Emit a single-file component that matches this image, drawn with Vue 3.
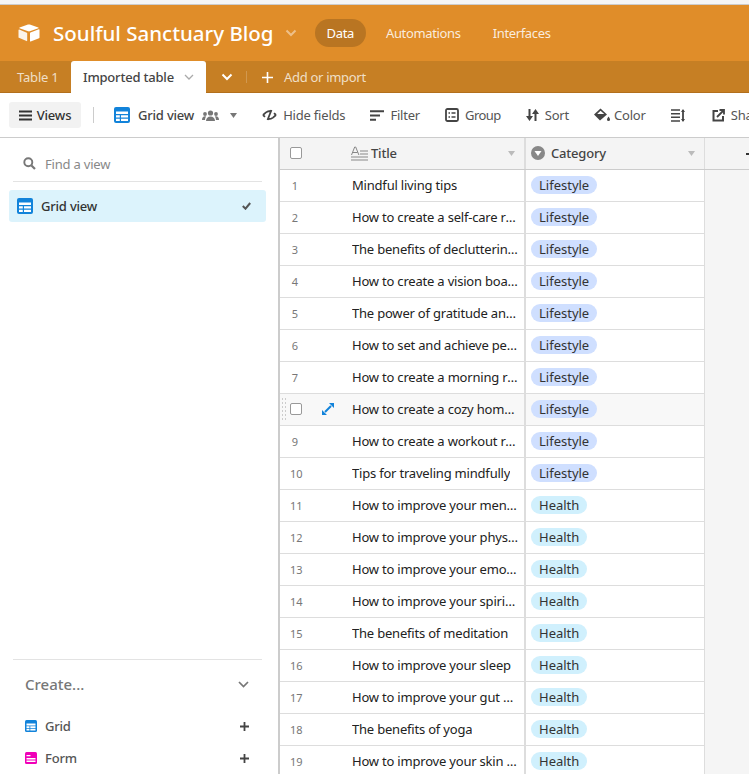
<script setup>
import { ref } from 'vue'

const titles = [
  'Mindful living tips',
  'How to create a self-care routine',
  'The benefits of decluttering your home',
  'How to create a vision board',
  'The power of gratitude and journaling',
  'How to set and achieve personal goals',
  'How to create a morning routine',
  'How to create a cozy home office',
  'How to create a workout routine',
  'Tips for traveling mindfully',
  'How to improve your mental health',
  'How to improve your physical health',
  'How to improve your emotional health',
  'How to improve your spiritual health',
  'The benefits of meditation',
  'How to improve your sleep',
  'How to improve your gut health',
  'The benefits of yoga',
  'How to improve your skin health',
]

const rows = ref(titles.map((title, i) => ({
  num: i + 1,
  title,
  category: i < 10 ? 'Lifestyle' : 'Health',
  hovered: i === 7,
})))
</script>

<template>
  <div class="page">
    <div class="strip"></div>

    <header class="topbar">
      <svg class="logo" width="22" height="18" viewBox="0 0 22 18">
        <path d="M10 .6 1.600 3.400c-.4.2-.4.7 0 .8l8.500 3.100c.5.2 1.200.2 1.700 0l8.500-3.100c.4-.1.4-.6 0-.8L11.800.6c-.6-.2-1.200-.2-1.800 0z" fill="#fff" />
        <path d="M12 9.200v7.800c0 .4.400.600.700.500l8.300-3.200c.3-.1.500-.4.500-.7V5.800c0-.4-.4-.6-.7-.5L12.500 8.500c-.3.100-.5.400-.5.700z" fill="#fff" />
        <path d="M.5 6v7.200c0 .3.200.5.400.6l7.600 3.300c.4.100.7-.1.700-.5V9.400c0-.3-.2-.5-.4-.6L1.200 5.500C.9 5.400.5 5.600.5 6z" fill="#fff" opacity=".9" />
      </svg>
      <h1 class="base-name">Soulful Sanctuary Blog</h1>
      <svg class="base-caret" width="12" height="8" viewBox="0 0 12 8"><path d="M1.500 1.500 6 6l4.500-4.500" fill="none" stroke="#fff" stroke-opacity=".45" stroke-width="2" /></svg>
      <nav class="top-nav">
        <span class="top-link active">Data</span>
        <span class="top-link">Automations</span>
        <span class="top-link">Interfaces</span>
      </nav>
    </header>

    <div class="tabbar">
      <span class="tab">Table 1</span>
      <span class="tab current">
        Imported table
        <svg width="10" height="6" viewBox="0 0 10 6"><path d="M1 1l4 4 4-4" fill="none" stroke="#aaa" stroke-width="1.300" /></svg>
      </span>
      <svg class="tab-more" width="12" height="8" viewBox="0 0 12 8"><path d="M1.500 1.500 6 6l4.500-4.500" fill="none" stroke="#fff" stroke-width="2" /></svg>
      <span class="tab-sep"></span>
      <span class="add-import">
        <svg width="11" height="11" viewBox="0 0 11 11"><path d="M5.500 0v11M0 5.500h11" stroke="#fff" stroke-width="1.600" /></svg>
        Add or import
      </span>
    </div>

    <div class="toolbar">
      <button class="views-btn">
        <svg width="13" height="11" viewBox="0 0 13 11"><path d="M0 1.500h13M0 5.500h13M0 9.500h13" stroke="#333" stroke-width="2" /></svg>
        Views
      </button>
      <span class="tool-sep"></span>
      <span class="view-name">
        <svg class="grid-icon" width="16" height="16" viewBox="0 0 16 16">
          <rect width="16" height="16" rx="2" fill="#1283da" />
          <path d="M2 4.500h12v2.500H2zM2 8.200h3.800v2.400H2zM7 8.200h7v2.400H7zM2 11.800h3.800V14H2zM7 11.800h7V14H7z" fill="#fff" />
        </svg>
        Grid view
        <svg width="17" height="11" viewBox="0 0 17 11" fill="#777">
          <circle cx="8.500" cy="3" r="2.600" /><path d="M4 11c0-3 2-4.500 4.500-4.500S13 8 13 11z" />
          <circle cx="3" cy="4" r="1.900" /><path d="M0 10c0-2.500 1.200-3.700 3-3.700.4 0 .7 0 1 .2C3.300 7.500 3 8.700 3 10z" />
          <circle cx="14" cy="4" r="1.900" /><path d="M17 10c0-2.500-1.200-3.700-3-3.700-.4 0-.7 0-1 .2.700 1 1 2.200 1 3.500z" />
        </svg>
        <svg class="mini-caret" width="7" height="5" viewBox="0 0 7 5"><path d="M0 0h7L3.500 5z" fill="#777" /></svg>
      </span>
      <span class="tool">
        <svg width="15" height="12" viewBox="0 0 15 12"><path d="M1 6l3-2.600C5.400 2.300 6.800 2 8.500 2M14 6l-3 2.600C9.600 9.700 8.200 10 6.500 10M9.500 1 5.500 11M1 6l2 1.800M14 6l-2-1.800" fill="none" stroke="#444" stroke-width="1.800" /></svg>
        Hide fields
      </span>
      <span class="tool">
        <svg width="14" height="11" viewBox="0 0 14 11"><path d="M0 1.200h14M0 5.500h10M0 9.800h6" stroke="#444" stroke-width="2" /></svg>
        Filter
      </span>
      <span class="tool group-tool">
        <svg width="14" height="14" viewBox="0 0 14 14"><rect x="1" y="1" width="12" height="12" rx="1.500" fill="none" stroke="#444" stroke-width="1.800" /><path d="M3.500 5h1.500M6.500 5h4M3.500 9h1.500M6.500 9h4" stroke="#444" stroke-width="1.600" /></svg>
        Group
      </span>
      <span class="tool">
        <svg width="13" height="12" viewBox="0 0 13 12"><path d="M3.500 0v8M9.500 4v8" stroke="#444" stroke-width="2" /><path d="M0 7l3.500 5L7 7zM6 5l3.500-5L13 5z" fill="#444" /></svg>
        Sort
      </span>
      <span class="tool color-tool">
        <svg width="17" height="14" viewBox="0 0 17 14"><path d="M6.500.5 0 6.500 6 12.500l7-6z" fill="#444" /><path d="M6.500 2.800 3.200 6h7z" fill="#fff" /><path d="M14.500 8.500c1 1.400 1.500 2.300 1.500 3a1.500 1.500 0 0 1-3 0c0-.7.500-1.600 1.500-3z" fill="#444" /></svg>
        Color
      </span>
      <span class="tool density-tool">
        <svg width="14" height="13" viewBox="0 0 14 13"><path d="M0 1h9M0 4.700h9M0 8.300h9M0 12h9" stroke="#444" stroke-width="1.500" /><path d="M12 1v11" stroke="#444" stroke-width="1.800" /><path d="M10 3l2-3 2 3zM10 10l2 3 2-3z" fill="#444" /></svg>
      </span>
      <span class="tool">
        <svg width="13" height="13" viewBox="0 0 13 13"><path d="M6 2H1.500v9.500H11V7" fill="none" stroke="#444" stroke-width="2" /><path d="M5 8l6-6M7.500 1H12v4.500" fill="none" stroke="#444" stroke-width="1.800" /></svg>
        Share view
      </span>
    </div>

    <div class="workspace">
      <aside class="sidebar">
        <div class="find">
          <svg width="13" height="13" viewBox="0 0 13 13"><circle cx="5.300" cy="5.300" r="4" fill="none" stroke="#777" stroke-width="1.900" /><path d="M8.500 8.500 12 12" stroke="#777" stroke-width="2.200" /></svg>
          <span>Find a view</span>
        </div>
        <div class="view-item">
          <svg class="grid-icon" width="16" height="16" viewBox="0 0 16 16">
            <rect width="16" height="16" rx="2" fill="#1283da" />
            <path d="M2 4.500h12v2.500H2zM2 8.200h3.800v2.400H2zM7 8.200h7v2.400H7zM2 11.800h3.800V14H2zM7 11.800h7V14H7z" fill="#fff" />
          </svg>
          <span class="view-label">Grid view</span>
          <svg width="9" height="8" viewBox="0 0 9 8"><path d="M.8 4l2.700 2.700L8.200 1" fill="none" stroke="#555" stroke-width="2" /></svg>
        </div>
        <div class="create">
          <div class="create-head">
            <span>Create...</span>
            <svg width="11" height="7" viewBox="0 0 11 7"><path d="M1 1l4.500 4.500L10 1" fill="none" stroke="#777" stroke-width="1.700" /></svg>
          </div>
          <div class="create-item">
            <svg width="12" height="12" viewBox="0 0 12 12"><rect width="12" height="12" rx="1.500" fill="#1283da" /><path d="M1.500 3.500h9v2h-9zM1.500 6.300h3v2h-3zM5.300 6.300h5.200v2H5.300zM1.500 9h3v1.500h-3zM5.300 9h5.200v1.500H5.300z" fill="#fff" /></svg>
            <span class="create-label">Grid</span>
            <svg width="9" height="9" viewBox="0 0 9 9"><path d="M4.500 0v9M0 4.500h9" stroke="#444" stroke-width="1.800" /></svg>
          </div>
          <div class="create-item">
            <svg width="12" height="12" viewBox="0 0 12 12"><rect width="12" height="12" rx="1.500" fill="#f000b8" /><path d="M1.500 3h4v1.300h-4zM1.500 6h9v1.500h-9zM1.500 8.500h9V10h-9z" fill="#fff" /></svg>
            <span class="create-label">Form</span>
            <svg width="9" height="9" viewBox="0 0 9 9"><path d="M4.500 0v9M0 4.500h9" stroke="#444" stroke-width="1.800" /></svg>
          </div>
        </div>
      </aside>

      <section class="grid">
        <div class="head-row">
          <div class="num-cell head-num"><span class="check"></span></div>
          <div class="title-cell head-cell">
            <svg class="type-icon" width="17" height="15" viewBox="0 0 17 15"><path d="M.5 9 3.700 1h1l3.200 8M1.800 6.500h4.800" fill="none" stroke="#888" stroke-width="1" /><path d="M9 5h8M9 8h8M0 11h17M0 14h17" stroke="#888" stroke-width="1" /></svg>
            <span class="head-label">Title</span>
            <svg class="mini-caret" width="7" height="5" viewBox="0 0 7 5"><path d="M0 0h7L3.500 5z" fill="#bbb" /></svg>
          </div>
          <div class="cat-cell head-cell">
            <svg width="14" height="14" viewBox="0 0 14 14"><circle cx="7" cy="7" r="7" fill="#888" /><path d="M3.500 5h7L7 10z" fill="#fff" /></svg>
            <span class="head-label">Category</span>
            <svg class="mini-caret" width="7" height="5" viewBox="0 0 7 5"><path d="M0 0h7L3.500 5z" fill="#bbb" /></svg>
          </div>
          <div class="add-col">
            <svg width="12" height="12" viewBox="0 0 12 12"><path d="M6 0v12M0 6h12" stroke="#333" stroke-width="2" /></svg>
          </div>
        </div>
        <div v-for="row in rows" :key="row.num" class="row" :class="{ hovered: row.hovered }">
          <div class="num-cell">
            <template v-if="row.hovered">
              <span class="drag"></span>
              <span class="check"></span>
              <svg class="expand" width="12" height="12" viewBox="0 0 12 12"><path d="M7 0h5v5zM0 7v5h5z" fill="#1283da" /><path d="M9 3 3 9" stroke="#1283da" stroke-width="2" /></svg>
            </template>
            <span v-else class="num">{{ row.num }}</span>
          </div>
          <div class="title-cell"><span class="title-text">{{ row.title }}</span></div>
          <div class="cat-cell">
            <span class="pill" :class="row.category.toLowerCase()">{{ row.category }}</span>
          </div>
          <div class="empty"></div>
        </div>
      </section>
    </div>
  </div>
</template>

<style>
html, body { margin: 0; height: 100%; overflow: hidden; background: #fff; }
</style>

<style scoped>
.page {
  width: 749px;
  height: 774px;
  overflow: hidden;
  display: flex;
  flex-direction: column;
  font-family: "Noto Sans", sans-serif;
  font-size: 13px;
  letter-spacing: -0.2px;
  color: #333;
}

.strip {
  height: 4px;
  flex: none;
  background: #f5f5f5;
  border-bottom: 1px solid #ccc;
}

.topbar {
  height: 56px;
  flex: none;
  background: #e08d29;
  display: flex;
  align-items: center;
  padding-left: 18px;
  color: #fff;
  box-sizing: border-box;
}

.logo { margin-right: 13px; flex: none; }

.base-name {
  margin: 0;
  font-size: 20.5px;
  font-weight: 500;
  letter-spacing: 0;
  white-space: nowrap;
}

.base-caret { margin-left: 11px; flex: none; }

.top-nav {
  display: flex;
  align-items: center;
  margin-left: 18px;
  gap: 8px;
  letter-spacing: -0.35px;
}

.top-link {
  padding: 0 12px;
  line-height: 28px;
  border-radius: 14px;
  color: rgba(255, 255, 255, .85);
}

.top-link.active {
  background: #b97522;
  color: #fff;
}

.tabbar {
  height: 32px;
  flex: none;
  background: #c67f24;
  box-shadow: inset 0 -1px #b26f1c;
  display: flex;
  align-items: center;
  color: rgba(255, 255, 255, .75);
}

.tab {
  width: 71px;
  flex: none;
  box-sizing: border-box;
  padding-left: 17px;
  white-space: nowrap;
}

.tab.current {
  align-self: stretch;
  display: flex;
  align-items: center;
  gap: 10px;
  background: #fff;
  color: #444;
  font-weight: 500;
  border-radius: 3px 3px 0 0;
  width: 135px;
  padding: 0 12px;
}

.tab-more { margin-left: 15px; flex: none; }

.tab-sep {
  width: 1px;
  height: 12px;
  margin-left: 13px;
  background: rgba(255, 255, 255, .2);
}

.add-import {
  display: flex;
  align-items: center;
  gap: 11px;
  margin-left: 15px;
  letter-spacing: -0.3px;
  white-space: nowrap;
}

.toolbar {
  height: 45px;
  flex: none;
  display: flex;
  align-items: center;
  padding-left: 9px;
  border-bottom: 1px solid #ccc;
  box-sizing: border-box;
  white-space: nowrap;
  color: #555;
}

.views-btn {
  height: 26px;
  width: 72px;
  flex: none;
  border: 0;
  border-radius: 3px;
  background: #f2f2f2;
  display: flex;
  align-items: center;
  justify-content: center;
  gap: 5px;
  font: inherit;
  letter-spacing: inherit;
  font-weight: 500;
  color: #333;
  padding: 0;
}

.tool-sep {
  width: 1px;
  height: 16px;
  flex: none;
  background: #ccc;
  margin: 0 20px 0 12px;
}

.view-name {
  display: flex;
  align-items: center;
  gap: 8px;
  flex: none;
  font-weight: 500;
  color: #444;
  margin-right: 25px;
}

.mini-caret { flex: none; }

.view-name .mini-caret { margin-left: 3px; }

.tool {
  display: flex;
  align-items: center;
  gap: 6px;
  margin-right: 25px;
  flex: none;
}

.group-tool { letter-spacing: -0.55px; }

.color-tool { gap: 3px; }

.density-tool { margin-right: 27px; }

.workspace {
  flex: 1;
  display: flex;
  min-height: 0;
}

.sidebar {
  width: 280px;
  flex: none;
  border-right: 2px solid #ccc;
  box-sizing: border-box;
  padding: 0 12px 0 9px;
  display: flex;
  flex-direction: column;
}

.find {
  height: 44px;
  margin: 0 4px 8px 4px;
  padding: 8px 0 0 10px;
  border-bottom: 1px solid #e3e3e3;
  display: flex;
  align-items: center;
  gap: 9px;
  color: #888;
  box-sizing: border-box;
  flex: none;
}

.view-item {
  height: 32px;
  background: #dcf3fc;
  border-radius: 3px;
  display: flex;
  align-items: center;
  padding: 0 6px 0 8px;
  color: #333;
  font-weight: 500;
  flex: none;
}

.view-item .view-label { margin-left: 8px; flex: 1; }
.view-item svg:last-child { margin-right: 9px; }

.create {
  margin: auto 4px 0 4px;
  border-top: 1px solid #e3e3e3;
}

.create-head {
  height: 50px;
  display: flex;
  justify-content: space-between;
  align-items: center;
  padding: 0 13px 2px 12px;
  box-sizing: border-box;
  font-size: 15px;
  letter-spacing: 0;
  font-weight: 500;
  color: #777;
}

.create-item {
  height: 32px;
  display: flex;
  align-items: center;
  padding: 0 13px 0 12px;
  font-weight: 500;
  color: #555;
}

.create-label { flex: 1; margin-left: 8px; }

.grid {
  flex: 1;
  min-width: 0;
  display: flex;
  flex-direction: column;
}

.head-row,
.row {
  display: flex;
  height: 32px;
  flex: none;
  box-sizing: border-box;
  border-bottom: 1px solid #ddd;
}

.head-row {
  background: #f4f4f4;
  border-bottom-color: #ccc;
}

.row.hovered { background: #f8f8f8; }

.num-cell {
  width: 72px;
  flex: none;
  position: relative;
  display: flex;
  align-items: center;
  padding: 0 0 1px 10px;
  box-sizing: border-box;
}

.num {
  width: 10px;
  text-align: center;
  font-size: 11px;
  letter-spacing: 0;
  color: #777;
}

.check {
  width: 10px;
  height: 10px;
  border: 1px solid #999;
  border-radius: 2px;
  background: #fff;
}

.drag {
  position: absolute;
  left: 1px;
  top: 3px;
  width: 6px;
  height: 24px;
  background-image: radial-gradient(#ccc 1px, transparent 1px);
  background-size: 3px 4px;
}

.expand {
  position: absolute;
  left: 42px;
  top: 9px;
}

.title-cell {
  width: 174px;
  flex: none;
  display: flex;
  align-items: center;
  border-right: 2px solid #ddd;
  box-sizing: border-box;
  padding: 0 5px 1px 0;
  min-width: 0;
}

.title-text {
  overflow: hidden;
  text-overflow: ellipsis;
  white-space: nowrap;
  color: #222;
}

.head-cell { gap: 3px; }

.type-icon { margin-left: -1px; flex: none; }

.head-label { flex: 1; color: #444; font-weight: 500; }

.title-cell .mini-caret { margin-right: 4px; }

.cat-cell .mini-caret { margin-right: 9px; }

.cat-cell {
  width: 179px;
  flex: none;
  display: flex;
  align-items: center;
  padding: 0 0 1px 5px;
  border-right: 1px solid #ddd;
  box-sizing: border-box;
}

.head-cell.cat-cell { gap: 6px; }

.pill {
  height: 18px;
  line-height: 18px;
  padding: 0 8px;
  border-radius: 9px;
  letter-spacing: 0;
  color: #333;
}

.pill.lifestyle { background: #cfdfff; }
.pill.health { background: #d0f0fd; }

.empty { flex: 1; background: #f5f5f5; margin-bottom: -1px; }

.add-col {
  width: 94px;
  flex: none;
  display: flex;
  justify-content: center;
  align-items: center;
}
</style>
